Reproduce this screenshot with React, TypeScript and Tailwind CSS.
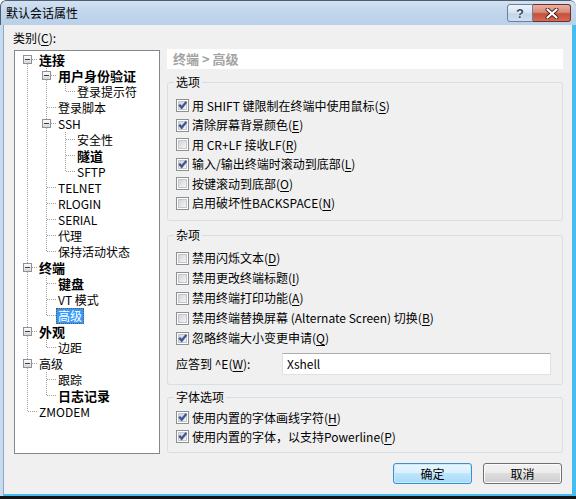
import React from "react";

type TNode = { t: string; d: number; b?: boolean; e?: boolean; sel?: boolean };

const tree: TNode[] = [
  { t: "连接", d: 0, b: true, e: true },
  { t: "用户身份验证", d: 1, b: true, e: true },
  { t: "登录提示符", d: 2 },
  { t: "登录脚本", d: 1 },
  { t: "SSH", d: 1, e: true },
  { t: "安全性", d: 2 },
  { t: "隧道", d: 2, b: true },
  { t: "SFTP", d: 2 },
  { t: "TELNET", d: 1 },
  { t: "RLOGIN", d: 1 },
  { t: "SERIAL", d: 1 },
  { t: "代理", d: 1 },
  { t: "保持活动状态", d: 1 },
  { t: "终端", d: 0, b: true, e: true },
  { t: "键盘", d: 1, b: true },
  { t: "VT 模式", d: 1 },
  { t: "高级", d: 1, sel: true },
  { t: "外观", d: 0, b: true, e: true },
  { t: "边距", d: 1 },
  { t: "高级", d: 0, e: true },
  { t: "跟踪", d: 1 },
  { t: "日志记录", d: 1, b: true },
  { t: "ZMODEM", d: 0 },
];

function hasNextAt(i: number, level: number) {
  for (let j = i + 1; j < tree.length; j++) {
    if (tree[j].d < level) return false;
    if (tree[j].d === level) return true;
  }
  return false;
}

const LC = "#a0a0a0";

function TreeRow({ n, i }: { n: TNode; i: number }) {
  const w = 22 + 19 * n.d;
  const x = 12.5 + 19 * n.d;
  const verts: React.ReactNode[] = [];
  for (let k = 0; k < n.d; k++) {
    if (hasNextAt(i, k)) {
      const vx = 12.5 + 19 * k;
      verts.push(
        <line key={k} x1={vx} x2={vx} y1={0} y2={16} stroke={LC} strokeDasharray="1 1" />
      );
    }
  }
  return (
    <div className="flex h-[16px] items-center">
      <svg width={w} height={16} className="shrink-0">
        {verts}
        {!(i === 0) && <line x1={x} x2={x} y1={0} y2={8} stroke={LC} strokeDasharray="1 1" />}
        {hasNextAt(i, n.d) && <line x1={x} x2={x} y1={8} y2={16} stroke={LC} strokeDasharray="1 1" />}
        <line x1={x + 0.5} x2={w} y1={7.5} y2={7.5} stroke={LC} strokeDasharray="1 1" />
        {n.e && (
          <g>
            <rect x={x - 4} y={3.5} width={8} height={8} fill="url(#expg)" stroke="#919191" />
            <line x1={x - 2.5} x2={x + 2.5} y1={7.5} y2={7.5} stroke="#2b3f6e" />
          </g>
        )}
      </svg>
      {n.sel ? (
        <span className="h-[16px] border border-dotted border-[#6b5a2e] bg-[#3399ff] px-[1px] text-[12px] leading-[14px] text-white whitespace-nowrap">
          {n.t}
        </span>
      ) : (
        <span
          className={
            n.b
              ? "px-[2px] text-[13px] font-bold leading-[16px] whitespace-nowrap"
              : "px-[2px] text-[12px] leading-[16px] whitespace-nowrap"
          }
        >
          {n.t}
        </span>
      )}
    </div>
  );
}

function CheckBox({ checked }: { checked: boolean }) {
  return (
    <svg width={13} height={13} className="shrink-0">
      <rect x={0.5} y={0.5} width={12} height={12} fill="#ffffff" stroke="#8e8f8f" />
      <rect x={2.5} y={2.5} width={8} height={8} fill="url(#cbg)" stroke="#c4c8ce" />
      {checked && (
        <path
          d="M2.6 6.6 L4.2 5.2 L5.6 7.1 L9.6 2.4 L11 3.5 L5.7 10.2 Z"
          fill="#3f559a"
          stroke="#2d3f7a"
          strokeWidth={0.4}
          strokeLinejoin="round"
        />
      )}
    </svg>
  );
}

function Mn({ text, k }: { text: string; k: string }) {
  return (
    <>
      {text}(<span className="underline underline-offset-[2px] decoration-1">{k}</span>)
    </>
  );
}

function CheckRow({ checked, text, k, h }: { checked: boolean; text: string; k: string; h: string }) {
  return (
    <div className={"flex items-center " + h}>
      <CheckBox checked={checked} />
      <span className="ml-[3px] whitespace-nowrap text-[12px] leading-[16px]">
        <Mn text={text} k={k} />
      </span>
    </div>
  );
}

function Legend({ children }: { children: React.ReactNode }) {
  return (
    <legend className="-ml-[2px] px-[2px] text-[12px] leading-[16px]">{children}</legend>
  );
}

export default function App() {
  return (
    <div className="flex h-[499px] w-[576px] flex-col overflow-hidden rounded-t-[6px] border-b-[3px] border-b-[#151515] bg-[#c7daee] font-['Noto_Sans_CJK_SC','Noto_Sans',sans-serif] text-black">
      <svg width={0} height={0} className="absolute">
        <defs>
          <linearGradient id="expg" x1="0" y1="0" x2="0" y2="1">
            <stop offset="0" stopColor="#ffffff" />
            <stop offset="1" stopColor="#d4d4d4" />
          </linearGradient>
          <linearGradient id="cbg" x1="0" y1="0" x2="1" y2="1">
            <stop offset="0" stopColor="#cfd2d7" />
            <stop offset="1" stopColor="#f7f7f7" />
          </linearGradient>
        </defs>
      </svg>

      {/* Title bar */}
      <div className="flex h-[25px] shrink-0 items-start rounded-t-[6px] border-l border-t border-[#4f5f72] bg-[linear-gradient(to_bottom,#d3e2f2_0%,#c3d7ed_40%,#b9d0e9_100%)]">
        <div className="ml-[5px] mt-[4px] text-[12px] leading-[16px]">默认会话属性</div>
        <div className="ml-auto mr-[5px] mt-[3px] flex">
          <div className="flex h-[18px] w-[26px] items-center justify-center rounded-l-[3px] border border-[#6b7f96] bg-[linear-gradient(to_bottom,#eef4fb_0%,#d9e5f2_45%,#c4d5e9_55%,#d0dff0_100%)] font-['Liberation_Sans',sans-serif] text-[13px] font-bold leading-none text-[#34475e] [text-shadow:0_0_1px_#fff,0_0_2px_#fff]">
            ?
          </div>
          <div className="flex h-[18px] w-[38px] items-center justify-center rounded-r-[3px] border border-l-0 border-[#6d3127] bg-[linear-gradient(to_bottom,#eab0a2_0%,#d98a78_45%,#c6503c_55%,#d46a55_100%)]">
            <svg width={14} height={11}>
              <path d="M2.5 1.5 L11.5 9.5 M11.5 1.5 L2.5 9.5" stroke="#4e2018" strokeWidth={4} strokeLinecap="round" />
              <path d="M2.5 1.5 L11.5 9.5 M11.5 1.5 L2.5 9.5" stroke="#ffffff" strokeWidth={2.2} strokeLinecap="round" />
            </svg>
          </div>
        </div>
      </div>

      {/* Client area */}
      <div className="ml-[3px] flex flex-1 border-b-2 border-l border-r-4 border-b-[#45bdf0] border-l-[#8aa8c8] border-r-[#45bdf0] bg-[#f0f0f0] pt-[5px]">
        {/* Left column */}
        <div className="ml-[10px] flex w-[146px] flex-col">
          <div className="-ml-[1px] text-[12px] leading-[16px]">
            <Mn text="类别" k="C" />:
          </div>
          <div className="mt-[4px] h-[404px] border border-[#828790] bg-white pt-[1px]">
            {tree.map((n, i) => (
              <TreeRow key={i} n={n} i={i} />
            ))}
          </div>
        </div>

        {/* Right column */}
        <div className="ml-[7px] mt-[19px] flex w-[396px] flex-col">
          <div className="flex h-[20px] items-center bg-white pl-[6px] text-[13px] font-bold leading-[16px] text-[#a3a3a3]">
            终端 &gt; 高级
          </div>

          <fieldset className="mt-[5px] h-[147px] min-w-0 rounded-[3px] border border-[#d5dfe5] px-[8px]">
            <Legend>选项</Legend>
            <div className="pt-[6px]">
              <CheckRow checked h="h-[19.5px]" text="用 SHIFT 键限制在终端中使用鼠标" k="S" />
              <CheckRow checked h="h-[19.5px]" text="清除屏幕背景颜色" k="E" />
              <CheckRow checked={false} h="h-[19.5px]" text="用 CR+LF 接收LF" k="R" />
              <CheckRow checked h="h-[19.5px]" text="输入/输出终端时滚动到底部" k="L" />
              <CheckRow checked={false} h="h-[19.5px]" text="按键滚动到底部" k="O" />
              <CheckRow checked={false} h="h-[19.5px]" text="启用破坏性BACKSPACE" k="N" />
            </div>
          </fieldset>

          <fieldset className="mt-[6px] h-[158px] min-w-0 rounded-[3px] border border-[#d5dfe5] px-[8px]">
            <Legend>杂项</Legend>
            <div className="pt-[5px]">
              <CheckRow checked={false} h="h-[20px]" text="禁用闪烁文本" k="D" />
              <CheckRow checked={false} h="h-[20px]" text="禁用更改终端标题" k="I" />
              <CheckRow checked={false} h="h-[20px]" text="禁用终端打印功能" k="A" />
              <CheckRow checked={false} h="h-[20px]" text="禁用终端替换屏幕 (Alternate Screen) 切换" k="B" />
              <CheckRow checked h="h-[20px]" text="忽略终端大小变更申请" k="Q" />
              <div className="mt-[5px] flex h-[22px] items-center">
                <div className="w-[106px] text-[12px] leading-[16px]">
                  应答到 ^E<Mn text="" k="W" />:
                </div>
                <div className="flex h-[22px] w-[269px] items-center border border-[#dde2e8] border-t-[#abadb3] bg-white pl-[4px] text-[12px] leading-[16px]">
                  Xshell
                </div>
              </div>
            </div>
          </fieldset>

          <fieldset className="mt-[4px] h-[64px] min-w-0 rounded-[3px] border border-[#d5dfe5] px-[8px]">
            <Legend>字体选项</Legend>
            <div className="pt-[3px]">
              <CheckRow checked h="h-[19px]" text="使用内置的字体画线字符" k="H" />
              <CheckRow checked h="h-[19px]" text="使用内置的字体，以支持Powerline" k="P" />
            </div>
          </fieldset>

          <div className="mt-[10px] flex justify-end gap-[11px] pr-[1px]">
            <div className="flex h-[21px] w-[79px] items-center justify-center rounded-[3px] border border-[#3c8fd0] bg-[linear-gradient(to_bottom,#eaf6fd_0%,#d9f0fc_50%,#bee6fd_50%,#a7d9f5_100%)] text-[12px] leading-[16px] shadow-[inset_0_0_0_1px_#c4ecfd]">
              确定
            </div>
            <div className="flex h-[21px] w-[79px] items-center justify-center rounded-[3px] border border-[#707070] bg-[linear-gradient(to_bottom,#f2f2f2_0%,#ebebeb_50%,#dddddd_50%,#cfcfcf_100%)] text-[12px] leading-[16px] shadow-[inset_0_0_0_1px_#fbfbfb]">
              取消
            </div>
          </div>
        </div>
      </div>
    </div>
  );
}
